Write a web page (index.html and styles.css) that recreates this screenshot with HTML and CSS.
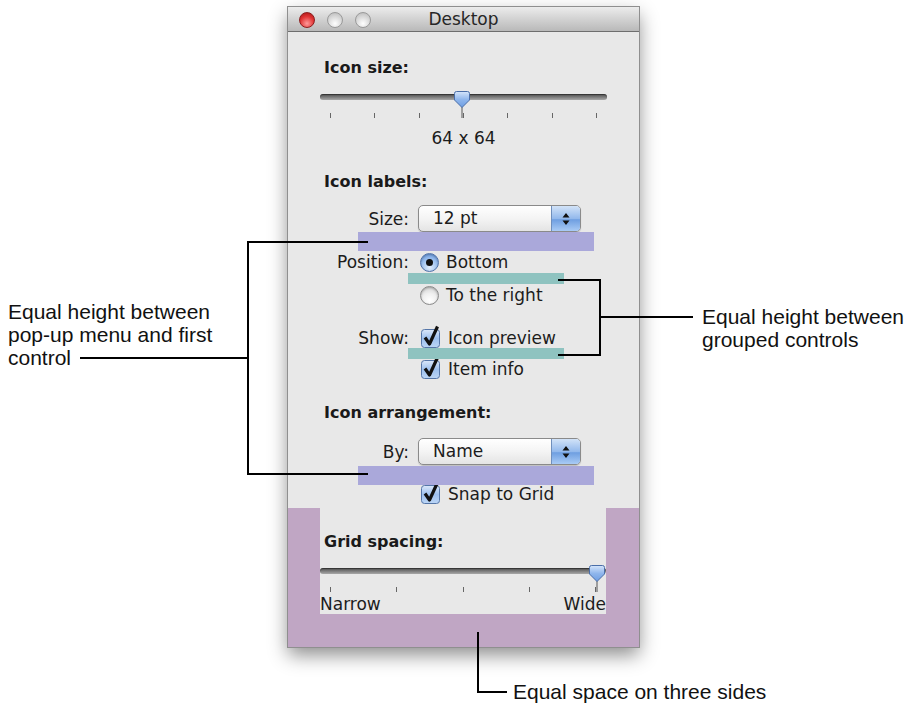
FILE: index.html
```html
<!DOCTYPE html>
<html lang="en">
<head>
  <meta charset="UTF-8">
  <title>Desktop view options</title>
  <link rel="stylesheet" href="styles.css">
</head>
<body>

<div class="stage">

  <div class="window">
    <div class="titlebar">
      <div class="lights">
        <span class="light close"></span>
        <span class="light"></span>
        <span class="light"></span>
      </div>
      <div class="title">Desktop</div>
      <div></div>
    </div>

    <div class="panel">
      <div class="heading">Icon size:</div>
      <div class="slider s-icon">
        <div class="track"></div>
        <div class="ticks"><i></i><i></i><i></i><i></i><i></i><i></i><i></i></div>
        <svg class="thumb thumb-mid" width="18" height="28" viewBox="0 0 18 28">
          <defs>
            <linearGradient id="thumbfill" x1="0" y1="0" x2="0" y2="1">
              <stop offset="0" stop-color="#d6e6fb"/>
              <stop offset="0.5" stop-color="#8fb6ec"/>
              <stop offset="1" stop-color="#6d9de2"/>
            </linearGradient>
          </defs>
          <line x1="9" y1="17" x2="9" y2="28" stroke="#555" stroke-width="1"/>
          <path d="M1.5 3.5 Q1.5 1.5 3.5 1.5 H14.5 Q16.5 1.5 16.5 3.5 V10 L9 17.5 L1.5 10 Z" fill="url(#thumbfill)" stroke="#4a6ea8" stroke-width="1"/>
        </svg>
      </div>
      <div class="value">64 x 64</div>

      <div class="heading h-labels">Icon labels:</div>
      <div class="row r-size">
        <span class="label">Size:</span>
        <div class="popup">
          <span class="popup-text">12 pt</span>
          <span class="stepper">
            <svg width="8" height="14" viewBox="0 0 8 14"><path d="M4 1 L7.5 5.5 H0.5 Z M4 13 L7.5 8.5 H0.5 Z" fill="#111"/></svg>
          </span>
        </div>
      </div>
      <div class="row r-position">
        <span class="label">Position:</span>
        <span class="choice"><span class="radio on"></span>Bottom</span>
      </div>
      <div class="row r-right">
        <span class="label"></span>
        <span class="choice"><span class="radio"></span>To the right</span>
      </div>
      <div class="row r-show">
        <span class="label">Show:</span>
        <span class="choice">
          <svg class="check" width="21" height="23" viewBox="0 0 21 23"><defs><linearGradient id="boxfill" x1="0" y1="0" x2="0" y2="1"><stop offset="0" stop-color="#dbe8fa"/><stop offset="0.5" stop-color="#9dc0ee"/><stop offset="1" stop-color="#bcd6f6"/></linearGradient></defs><rect x="1.5" y="4.5" width="18" height="18" rx="3" fill="url(#boxfill)" stroke="#5576a8"/><path d="M5 12.5 L9.5 19 L17.5 1.5" fill="none" stroke="#111" stroke-width="3.2" stroke-linejoin="round"/></svg>
          Icon preview
        </span>
      </div>
      <div class="row r-info">
        <span class="label"></span>
        <span class="choice">
          <svg class="check" width="21" height="23" viewBox="0 0 21 23"><rect x="1.5" y="4.5" width="18" height="18" rx="3" fill="url(#boxfill)" stroke="#5576a8"/><path d="M5 12.5 L9.5 19 L17.5 1.5" fill="none" stroke="#111" stroke-width="3.2" stroke-linejoin="round"/></svg>
          Item info
        </span>
      </div>

      <div class="heading h-arrange">Icon arrangement:</div>
      <div class="row r-by">
        <span class="label">By:</span>
        <div class="popup">
          <span class="popup-text">Name</span>
          <span class="stepper">
            <svg width="8" height="14" viewBox="0 0 8 14"><path d="M4 1 L7.5 5.5 H0.5 Z M4 13 L7.5 8.5 H0.5 Z" fill="#111"/></svg>
          </span>
        </div>
      </div>
      <div class="row r-snap">
        <span class="label"></span>
        <span class="choice">
          <svg class="check" width="21" height="23" viewBox="0 0 21 23"><rect x="1.5" y="4.5" width="18" height="18" rx="3" fill="url(#boxfill)" stroke="#5576a8"/><path d="M5 12.5 L9.5 19 L17.5 1.5" fill="none" stroke="#111" stroke-width="3.2" stroke-linejoin="round"/></svg>
          Snap to Grid
        </span>
      </div>

      <div class="grid-box">
        <div class="grid-inner">
          <div class="heading h-grid">Grid spacing:</div>
          <div class="slider s-grid">
            <div class="track"></div>
            <div class="ticks"><i></i><i></i><i></i><i></i><i></i></div>
            <svg class="thumb thumb-end" width="18" height="28" viewBox="0 0 18 28">
              <line x1="9" y1="17" x2="9" y2="28" stroke="#555" stroke-width="1"/>
              <path d="M1.5 3.5 Q1.5 1.5 3.5 1.5 H14.5 Q16.5 1.5 16.5 3.5 V10 L9 17.5 L1.5 10 Z" fill="url(#thumbfill)" stroke="#4a6ea8" stroke-width="1"/>
            </svg>
          </div>
          <div class="ends"><span>Narrow</span><span>Wide</span></div>
        </div>
      </div>
    </div>
  </div>

  <!-- annotation bands over the window -->
  <div class="band lavender b-size"></div>
  <div class="band teal b-radio"></div>
  <div class="band teal b-check"></div>
  <div class="band lavender b-by"></div>

  <svg class="callouts" width="909" height="710" viewBox="0 0 909 710">
    <path d="M368 242 H248 V474 H368 M80 358 H248" fill="none" stroke="#000" stroke-width="2"/>
    <path d="M558 280 H600 V355 H558 M600 317 H693" fill="none" stroke="#000" stroke-width="2"/>
    <path d="M478 632 V692 H507" fill="none" stroke="#000" stroke-width="2"/>
  </svg>

  <div class="note n-left">Equal height between<br>pop-up menu and first<br>control</div>
  <div class="note n-right">Equal height between<br>grouped controls</div>
  <div class="note n-bottom">Equal space on three sides</div>

</div>

</body>
</html>
```

FILE: styles.css
```css
body { margin: 0; background: #fff; }
.stage { position: relative; width: 909px; height: 710px; padding-top: 7px; box-sizing: border-box; overflow: hidden; }

.window { margin-left: 288px; width: 351px; height: 640px; display: flex; flex-direction: column; box-shadow: 0 0 0 1px #8f8f8f, 0 8px 18px rgba(0,0,0,0.45); font-family: "DejaVu Sans", sans-serif; color: #1c1c1c; }

.titlebar { height: 25px; display: grid; grid-template-columns: 1fr auto 1fr; align-items: center; background: linear-gradient(#ececec, #d2d2d2 50%, #b9b9b9); border-bottom: 1px solid #6e6e6e; box-sizing: border-box; }
.lights { display: flex; gap: 12px; padding-left: 11px; }
.light { width: 16px; height: 16px; border-radius: 50%; box-sizing: border-box; border: 1px solid #9a9a9a; background: radial-gradient(circle at 50% 75%, #ffffff, #d8d8d8 55%, #b5b5b5); }
.light.close { border-color: #8c1e1e; background: radial-gradient(circle at 50% 75%, #ff9a9a, #e03434 55%, #a41212); }
.title { font-size: 17px; line-height: 25px; color: #262626; }

.panel { flex: 1; display: flex; flex-direction: column; background: #e8e8e8; padding-top: 26px; }

.heading { margin-left: 36px; height: 20px; line-height: 20px; font-size: 16px; font-weight: bold; color: #1a1a1a; }
.h-labels, .h-arrange { margin-top: 24px; }
.h-grid { margin-left: 4px; }

.slider { position: relative; display: flow-root; height: 40px; }
.s-icon { margin-left: 32px; width: 287px; margin-top: 2px; }
.s-grid { margin-top: 2px; }
.track { margin-top: 14px; height: 6px; border-radius: 3px; background: linear-gradient(#4e4e4e, #7a7a7a 50%, #a8a8a8); box-shadow: inset 0 1px 1px rgba(0,0,0,0.4); }
.ticks { display: flex; justify-content: space-between; margin-top: 13px; padding: 0 10px; }
.ticks i { width: 1px; height: 5px; background: #666; }
.thumb { position: absolute; top: 10px; }
.thumb-mid { left: 133px; }
.thumb-end { left: 268px; }

.value { margin-left: 32px; width: 287px; margin-top: 8px; height: 20px; line-height: 20px; font-size: 17px; text-align: center; }

.row { display: grid; grid-template-columns: 121px auto; column-gap: 9px; align-items: center; height: 20px; font-size: 17px; line-height: 20px; }
.label { text-align: right; }
.r-size { margin-top: 13px; height: 27px; }
.r-position { margin-top: 20px; }
.r-right { margin-top: 13px; }
.r-show { margin-top: 23px; }
.r-info { margin-top: 11px; }
.r-by { margin-top: 15px; height: 27px; }
.r-snap { margin-top: 19px; }

.popup { width: 163px; height: 27px; box-sizing: border-box; display: flex; border: 1px solid #8a8a8a; border-radius: 5px; background: linear-gradient(#ffffff, #f4f4f4 50%, #e4e4e4); box-shadow: 0 1px 1px rgba(0,0,0,0.18); overflow: hidden; }
.popup-text { flex: 1; padding-left: 14px; line-height: 25px; }
.stepper { width: 28px; display: flex; align-items: center; justify-content: center; border-left: 1px solid #6f8fbd; background: linear-gradient(#d2e3f8, #93b9ec 50%, #6f9fe1 55%, #a9cbf5); }

.choice { display: flex; align-items: center; gap: 7px; margin-left: 2px; }
.radio { width: 19px; height: 19px; border-radius: 50%; box-sizing: border-box; border: 1px solid #8a8a8a; background: radial-gradient(circle at 50% 80%, #ffffff, #f0f0f0 45%, #c9c9c9); box-shadow: inset 0 1px 2px rgba(0,0,0,0.25); display: flex; align-items: center; justify-content: center; }
.radio.on { border-color: #4f72a8; background: radial-gradient(circle at 50% 80%, #e2eefc, #9ec2f0 50%, #5f93dc); }
.radio.on::after { content: ""; width: 7px; height: 7px; border-radius: 50%; background: #111; }
.check { margin-top: -3px; }

.grid-box { flex: 1; margin-top: 4px; display: flex; background: #c0a6c4; padding: 0 33px 33px 32px; }
.grid-inner { flex: 1; background: #e8e8e8; padding-top: 24px; }
.ends { margin-top: 1px; height: 19px; line-height: 19px; font-size: 17px; display: flex; justify-content: space-between; }

.band { position: absolute; }
.lavender { background: #aaa8da; }
.teal { background: #8fc3c0; }
.b-size { left: 358px; top: 232px; width: 236px; height: 19px; }
.b-by { left: 358px; top: 466px; width: 236px; height: 19px; }
.b-radio { left: 408px; top: 273px; width: 156px; height: 11px; }
.b-check { left: 408px; top: 348px; width: 156px; height: 11px; }

.callouts { position: absolute; left: 0; top: 0; pointer-events: none; }

.note { position: absolute; font-family: "Liberation Sans", Arial, sans-serif; font-size: 21px; line-height: 23px; color: #111; white-space: nowrap; }
.n-left { left: 8px; top: 300px; }
.n-right { left: 702px; top: 305px; }
.n-bottom { left: 513px; top: 680px; }
```
